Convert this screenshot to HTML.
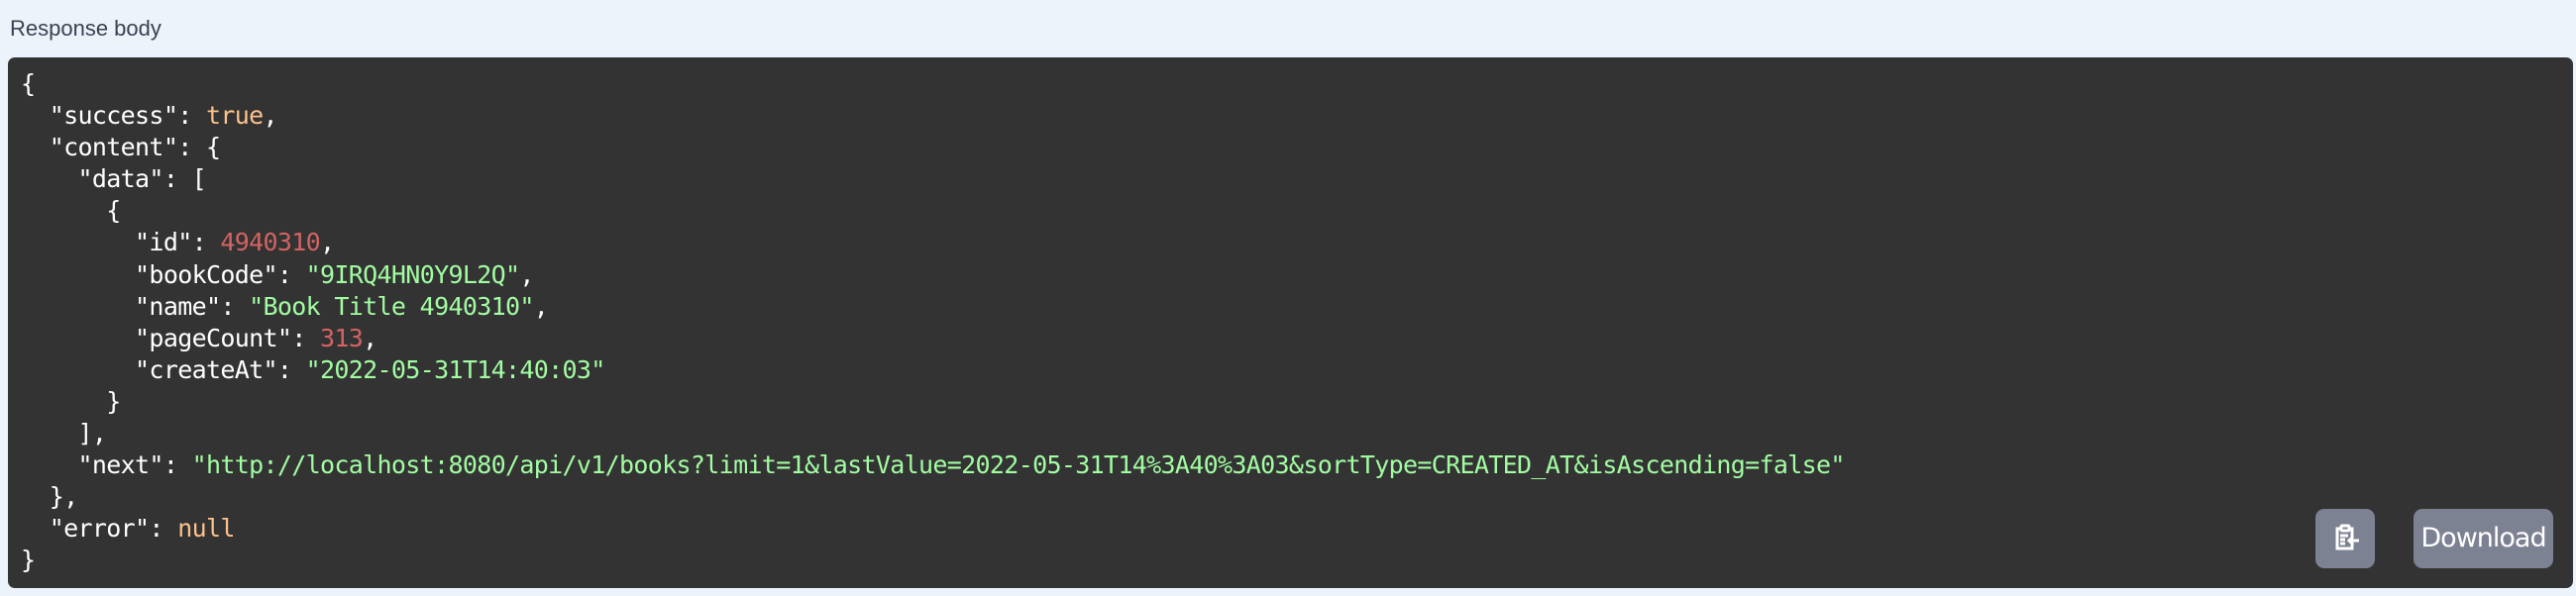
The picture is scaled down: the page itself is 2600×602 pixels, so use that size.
<!DOCTYPE html>
<html><head><meta charset="utf-8"><style>
html,body{margin:0;padding:0;width:2600px;height:602px;background:#edf3fb;overflow:hidden}
.lbl{position:absolute;left:10px;top:16px;font:22px "Liberation Sans",sans-serif;color:#3b4151}
.box{position:absolute;left:8px;top:58px;width:2589px;height:536px;background:#333;border-radius:7px}
pre{margin:0;position:absolute;left:13px;top:11px;font:25px/32.1px "DejaVu Sans Mono","Liberation Mono",monospace;letter-spacing:-0.67px;color:#fff}
.s{color:#a2fca2}.n{color:#d36363}.b{color:#fcc28c}
.btn{position:absolute;top:456px;height:60px;background:#7d8293;border-radius:9px;color:#fff}
.copy{left:2329px;width:60px}
.dl{left:2428px;width:141px;font:27px/60px "DejaVu Sans","Liberation Sans",sans-serif;letter-spacing:-1px;text-align:center}
</style></head><body>
<div class="lbl">Response body</div>
<div class="box">
<pre>{
  "success": <span class="b">true</span>,
  "content": {
    "data": [
      {
        "id": <span class="n">4940310</span>,
        "bookCode": <span class="s">"9IRQ4HN0Y9L2Q"</span>,
        "name": <span class="s">"Book Title 4940310"</span>,
        "pageCount": <span class="n">313</span>,
        "createAt": <span class="s">"2022-05-31T14:40:03"</span>
      }
    ],
    "next": <span class="s">"http://localhost:8080/api/v1/books?limit=1&amp;lastValue=2022-05-31T14%3A40%3A03&amp;sortType=CREATED_AT&amp;isAscending=false"</span>
  },
  "error": <span class="b">null</span>
}</pre>
<div class="btn copy"><svg width="60" height="60" viewBox="0 0 60 60" fill="none" stroke="#fff" stroke-width="3">
<path d="M27 20h-5v20h15v-6"/><path d="M33 20h4v8"/><rect x="26" y="17" width="8" height="5" rx="1"/>
<path d="M25 27h8M25 31h5M25 35h5"/><path d="M44 32h-10M38 28l-4 4 4 4"/></svg></div>
<div class="btn dl">Download</div>
</div>
</body></html>
